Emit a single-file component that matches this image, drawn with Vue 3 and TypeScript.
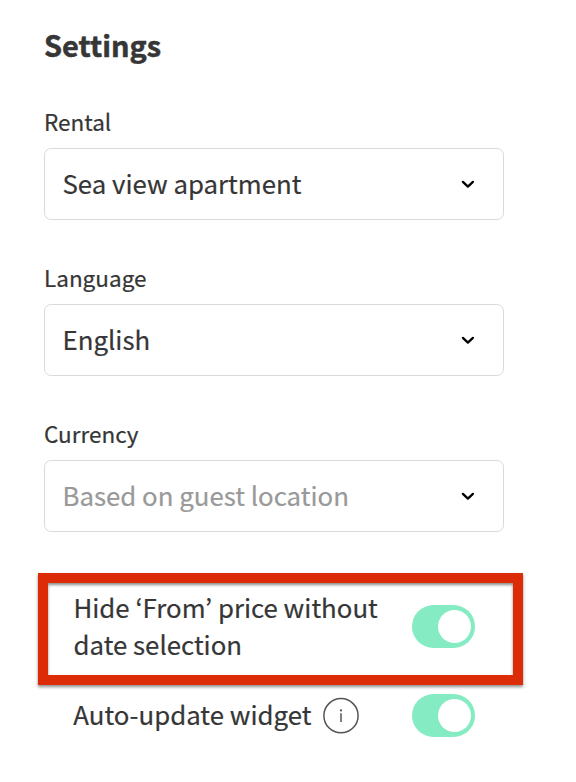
<script setup lang="ts">
import { ref } from 'vue'

interface Field { label: string; value: string; placeholder?: boolean }
const fields: Field[] = [
  { label: 'Rental', value: 'Sea view apartment' },
  { label: 'Language', value: 'English' },
  { label: 'Currency', value: 'Based on guest location', placeholder: true },
]
const hidePrice = ref(true)
const autoUpdate = ref(true)
</script>

<template>
  <main class="settings">
    <h1 class="title">Settings</h1>
    <section v-for="f in fields" :key="f.label" class="field">
      <div class="label">{{ f.label }}</div>
      <button class="select" type="button">
        <span class="value" :class="{ placeholder: f.placeholder }">{{ f.value }}</span>
        <svg class="chevron" width="16" height="12" viewBox="0 0 16 12"><path d="M2.9 3.9 L7.9 8.6 L12.9 3.9" /></svg>
      </button>
    </section>
    <div class="highlight">
      <span class="text">Hide ‘From’ price without<br />date selection</span>
      <button class="toggle" :class="{ on: hidePrice }" type="button" @click="hidePrice = !hidePrice"><span class="knob"></span></button>
    </div>
    <div class="row">
      <span class="text">Auto-update widget</span>
      <svg class="info" width="38" height="38" viewBox="0 0 38 38">
        <circle class="ring" cx="19" cy="18.7" r="17.1" />
        <circle cx="19" cy="13.4" r="1.1" />
        <path d="M19 16.2v8.8" />
      </svg>
      <button class="toggle" :class="{ on: autoUpdate }" type="button" @click="autoUpdate = !autoUpdate"><span class="knob"></span></button>
    </div>
  </main>
</template>

<style>
body { background: #fff; }
</style>

<style scoped>
.settings {
  box-sizing: border-box;
  width: 576px;
  height: 782px;
  padding: 24px 38px 0;
  overflow: hidden;
  color: #363636;
  font-family: "Noto Sans CJK KR", "Open Sans", sans-serif;
  -webkit-text-stroke: 0.2px currentColor;
}
.title { margin: 0 6px 37px; font-size: 28.9px; line-height: 40px; font-weight: 700; -webkit-text-stroke-width: 0.5px; }
.field { margin: 0 6px; height: 156px; }
.label { height: 47px; font-size: 22.5px; line-height: 40px; }
.select {
  box-sizing: border-box;
  display: flex;
  align-items: center;
  justify-content: space-between;
  width: 460px;
  height: 72px;
  padding: 0 27px 0 17.5px;
  border: 1px solid #dadada;
  border-radius: 7px;
  background: #fff;
  color: #363636;
  font: inherit;
  font-size: 25.8px;
}
.value { line-height: 38px; padding-bottom: 2px; }
.placeholder { color: #999; }
.chevron { fill: none; stroke: #000; stroke-width: 2.3; stroke-linecap: round; stroke-linejoin: round; }
.highlight {
  box-sizing: border-box;
  display: flex;
  align-items: center;
  justify-content: space-between;
  width: 485px;
  height: 112px;
  margin-top: 4px;
  padding: 0 38px 5px 25.5px;
  border: 10px solid #dc2c07;
  box-shadow: 0 2px 3px rgba(0, 0, 0, 0.45), inset 0 2px 3px rgba(0, 0, 0, 0.45);
}
.text { font-size: 25.8px; line-height: 37px; white-space: nowrap; }
.highlight .text { padding-bottom: 3px; }
.row { display: flex; align-items: center; width: 437px; height: 61px; padding-left: 35.3px; box-sizing: border-box; }
.row .text { padding-bottom: 4px; }
.info { margin-left: 10.5px; fill: #555; }
.info .ring, .info path { fill: none; stroke: #555; stroke-width: 1.5; }
.toggle { box-sizing: border-box; width: 63px; height: 43px; padding: 5px 4px 5px 5px; border: 0; border-radius: 22px; background: #ccc; flex: none; display: flex; }
.toggle.on { background: #84ebc3; justify-content: flex-end; }
.row .toggle { margin-left: auto; }
.knob { width: 33px; height: 33px; border-radius: 50%; background: #fff; }
</style>
